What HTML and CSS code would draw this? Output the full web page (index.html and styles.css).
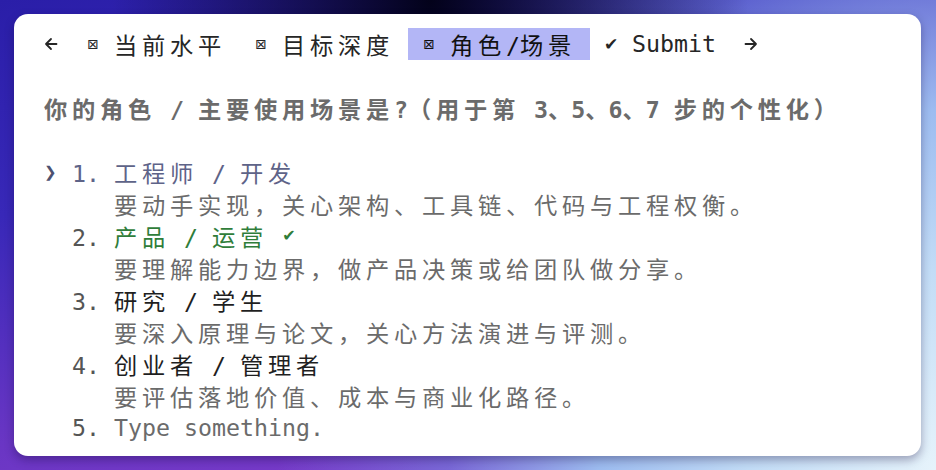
FILE: index.html
```html
<!DOCTYPE html>
<html lang="zh">
<head>
<meta charset="utf-8">
<link rel="stylesheet" href="styles.css">
</head>
<body>
<div class="card">
<div class="line tabs"><span class="ic"><svg width="14" height="32" viewBox="0 0 14 32"><path d="M12.5 16H2M7 11L2 16l5 5" fill="none" stroke="#262626" stroke-width="1.8" stroke-linecap="round" stroke-linejoin="round"/></svg></span> <span class="tab"> <span class="box">⊠</span> <span class="w">当前水平</span> </span><span class="tab"> <span class="box">⊠</span> <span class="w">目标深度</span> </span><span class="tab active"> <span class="box">⊠</span> <span class="w">角色</span>/<span class="w">场景</span> </span><span class="tab"> <span class="chk big">✔</span> Submit </span> <span class="ic"><svg width="14" height="32" viewBox="0 0 14 32"><path d="M1.5 16H12M7 11l5 5-5 5" fill="none" stroke="#262626" stroke-width="1.8" stroke-linecap="round" stroke-linejoin="round"/></svg></span></div>
<div class="line"> </div>
<div class="line q"><span class="w">你的角色</span> / <span class="w">主要使用场景是</span>?<span class="w">（用于第</span> 3<span class="n">、</span>5<span class="n">、</span>6<span class="n">、</span>7 <span class="w">步的个性化）</span></div>
<div class="line"> </div>
<div class="line"><span class="ptr">❯</span> <span class="num sel">1.</span> <span class="sel"><span class="w">工程师</span> / <span class="w">开发</span></span></div>
<div class="line desc">     <span class="w">要动手实现，关心架构、工具链、代码与工程权衡。</span></div>
<div class="line">  <span class="num">2.</span> <span class="ok"><span class="w">产品</span> / <span class="w">运营</span> <span class="chk">✔</span></span></div>
<div class="line desc">     <span class="w">要理解能力边界，做产品决策或给团队做分享。</span></div>
<div class="line">  <span class="num">3.</span> <span class="lab"><span class="w">研究</span> / <span class="w">学生</span></span></div>
<div class="line desc">     <span class="w">要深入原理与论文，关心方法演进与评测。</span></div>
<div class="line">  <span class="num">4.</span> <span class="lab"><span class="w">创业者</span> / <span class="w">管理者</span></span></div>
<div class="line desc">     <span class="w">要评估落地价值、成本与商业化路径。</span></div>
<div class="line desc">  <span class="num">5.</span> Type something.</div>
</div>
</body>
</html>
```
FILE: styles.css
```css
html, body {
  margin: 0;
  padding: 0;
}
body {
  width: 936px;
  height: 470px;
  overflow: hidden;
  background:
    radial-gradient(ellipse 34% 90% at 46% 0%, #03021a 0%, rgba(3,2,26,0.55) 45%, rgba(3,2,26,0) 100%),
    radial-gradient(ellipse 80% 170% at 100% 100%, #e6f3fb 0%, #c2dcf6 25%, #9dbcf0 45%, rgba(120,140,225,0.55) 65%, rgba(110,130,225,0) 88%),
    linear-gradient(165deg, #2a1ea8 0%, #3828b8 30%, #6a36c4 62%, #8a40d0 100%);
}
.card {
  margin: 14px 15px 0 14px;
  width: 877px;
  height: 428px;
  padding: 14px 0 0 30px;
  background: #ffffff;
  border-radius: 14px;
  box-shadow: 0 4px 10px rgba(20, 10, 60, 0.35);
  font-family: "DejaVu Sans Mono", "Noto Sans CJK SC", monospace;
  font-size: 23.25px;
  color: #2a2a2a;
}
.line {
  height: 32px;
  line-height: 32px;
  white-space: pre;
}
.w {
  font-family: "Noto Sans CJK SC", sans-serif;
  font-size: 23.25px;
  letter-spacing: 4.75px;
}
.n {
  font-family: "Noto Sans CJK SC", sans-serif;
  font-size: 23.25px;
}
.tabs {
  color: #262626;
}
.tab {
  display: inline-block;
  height: 32px;
  vertical-align: top;
}
.tab.active {
  background: #b3b6f6;
  color: #111111;
}
.ic {
  display: inline-block;
  width: 14px;
  height: 32px;
  vertical-align: top;
}
.ic svg {
  display: block;
}
.box {
  display: inline-block;
  width: 14px;
  text-align: center;
  font-family: "DejaVu Sans", sans-serif;
  font-size: 14px;
  vertical-align: top;
}
.chk {
  display: inline-block;
  width: 14px;
  text-align: center;
  font-family: "DejaVu Sans", sans-serif;
  font-size: 16px;
  vertical-align: top;
}
.chk.big {
  font-size: 17px;
}
.q {
  color: #6b6b6b;
  font-weight: bold;
}
.ptr {
  display: inline-block;
  width: 14px;
  font-family: "DejaVu Sans", sans-serif;
  font-size: 15px;
  font-weight: bold;
  color: #4d5170;
  vertical-align: top;
}
.num {
  color: #555555;
}
.sel {
  color: #5e6388;
}
.ok {
  color: #2f7d3a;
}
.lab {
  color: #1f1f1f;
}
.desc {
  color: #6b6b6b;
}
```
